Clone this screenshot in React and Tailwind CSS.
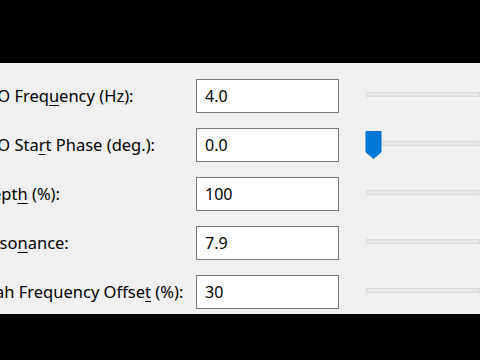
const rows = [
  { pre: "LFO Freq", key: "u", post: "ency (Hz):", value: "4.0", thumb: false },
  { pre: "LFO Sta", key: "r", post: "t Phase (deg.):", value: "0.0", thumb: true },
  { pre: "Dept", key: "h", post: " (%):", value: "100", thumb: false },
  { pre: "Reso", key: "n", post: "ance:", value: "7.9", thumb: false },
  { pre: "Wah Frequency Offse", key: "t", post: " (%):", value: "30", thumb: false },
];

function Slider({ thumb }) {
  return (
    <div className="relative flex-1 h-[34px] ml-[27px]">
      <div className="mt-[13px] h-[5px] w-full bg-[#e7e7e7] border border-[#d8d8d8]" />
      {thumb && (
        <svg className="absolute left-[-1px] top-[3px]" width="17" height="28" viewBox="0 0 17 28">
          <path d="M1 0.5 H16 V21 L8.5 27.5 L1 21 Z" fill="#0078d7" stroke="#0a6cc0" strokeWidth="1" strokeLinejoin="round" />
        </svg>
      )}
    </div>
  );
}

export default function App() {
  return (
    <div
      className="w-[480px] h-[360px] bg-[#f0f0f0] overflow-hidden flex flex-col text-black"
      style={{ fontFamily: '"Noto Sans", "Open Sans", sans-serif' }}
    >
      <div className="h-[63px] shrink-0 bg-black" />
      <div className="flex-1 flex flex-col gap-[15px] pt-[16px] ml-[-20px]">
        {rows.map((r, i) => (
          <div key={i} className="flex items-center h-[34px]">
            <div className="w-[216px] shrink-0 text-[16.5px] leading-none whitespace-nowrap">
              {r.pre}
              <span className="underline underline-offset-[3px] decoration-1">{r.key}</span>
              {r.post}
            </div>
            <div className="w-[143px] h-[34px] shrink-0 bg-white border border-[#7a7a7a] flex items-center px-[8px] text-[16px]">
              {r.value}
            </div>
            <Slider thumb={r.thumb} />
          </div>
        ))}
      </div>
      <div className="h-[46px] shrink-0 bg-black" />
    </div>
  );
}
